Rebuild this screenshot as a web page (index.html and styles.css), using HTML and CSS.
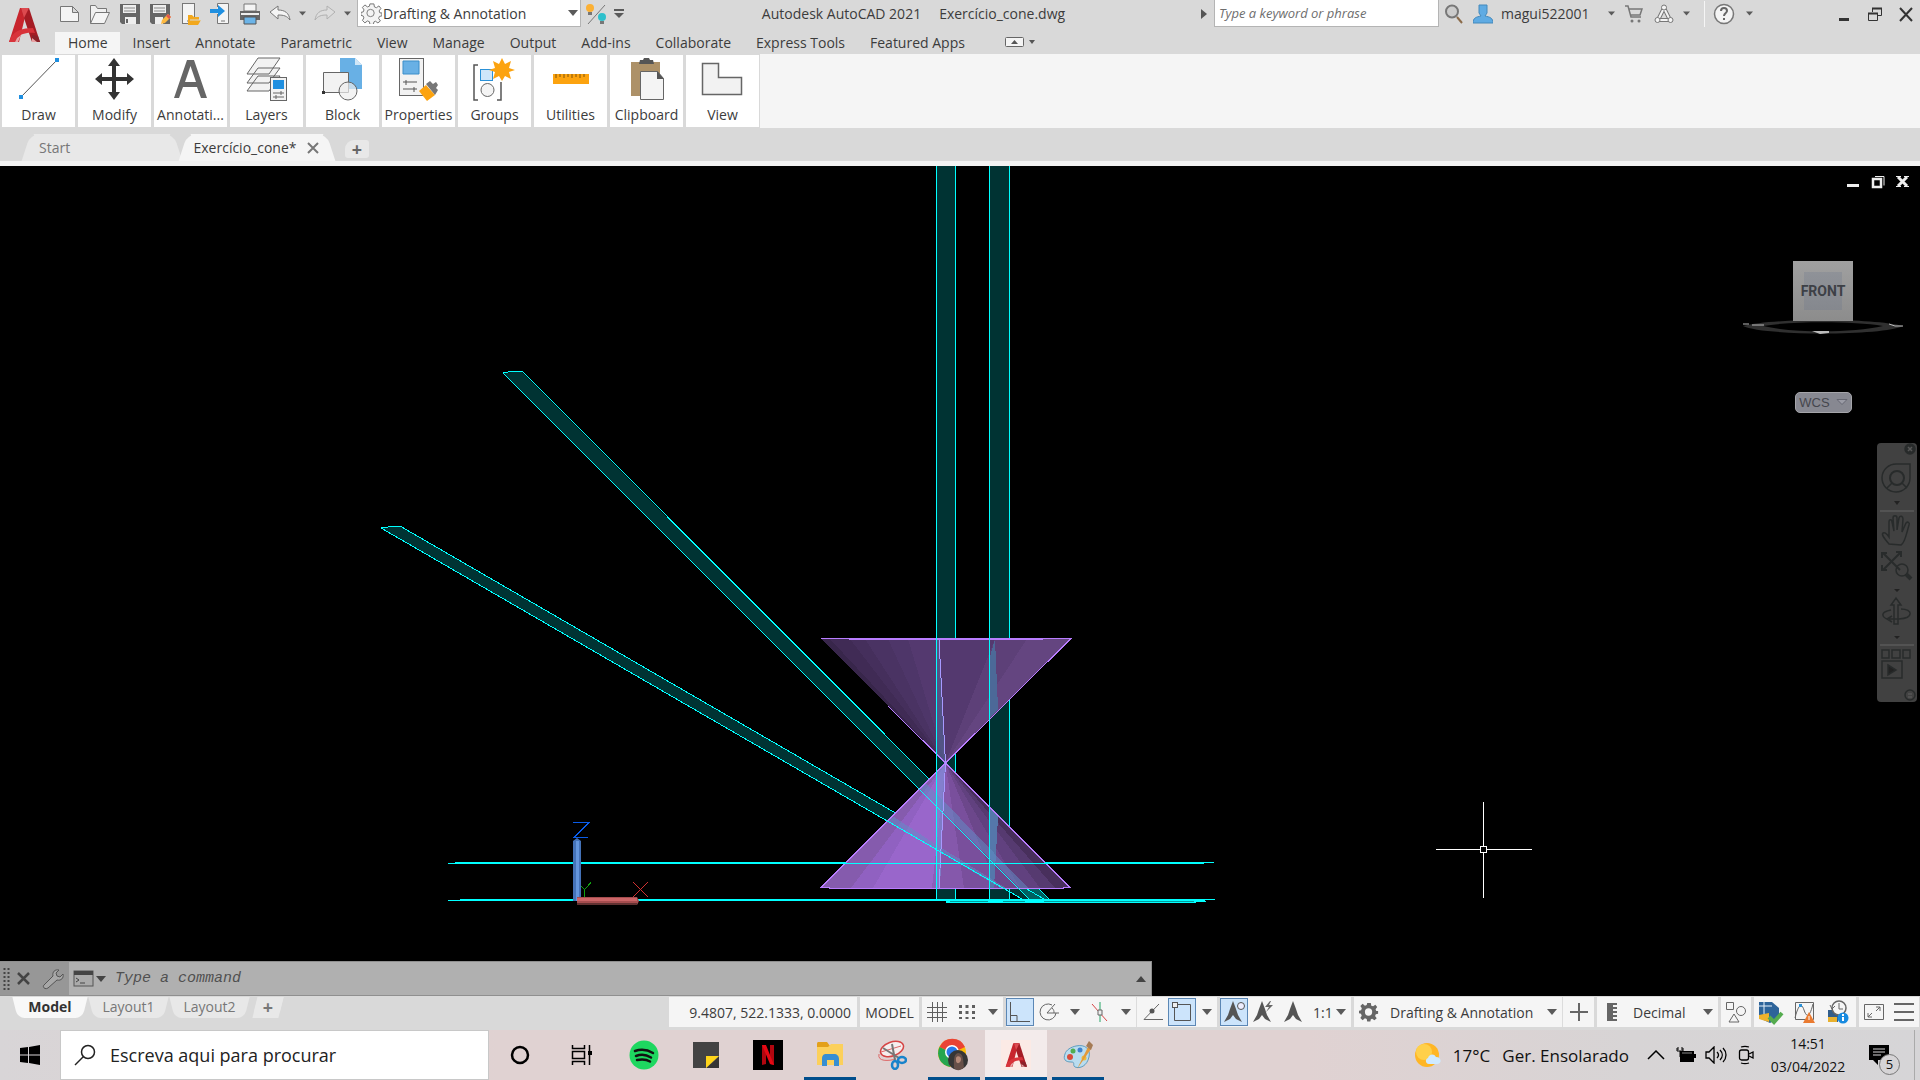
FILE: index.html
```html
<!DOCTYPE html>
<html lang="en">
<head>
    <meta charset="UTF-8">
    <meta name="viewport" content="width=device-width, initial-scale=1.0">
    <title>Autodesk AutoCAD 2021 - Exercício_cone.dwg</title>
    <link rel="stylesheet" href="styles.css">
</head>
<body>
    <svg class="defs" width="0" height="0" aria-hidden="true">
        <symbol id="caret" viewBox="0 0 10 6"><path d="M0 0h10L5 6z" fill="#5a5a5a"/></symbol>
        <symbol id="autocad" viewBox="0 0 32 36">
            <path d="M12 1h9l-4 9-6 25H1z" fill="#c8252d"/>
            <path d="M13 1h8l11 34h-8L15 8z" fill="#a51c24"/>
            <path d="M13 1h8l-5 10z" fill="#dd4a4f"/>
            <path d="M3 30c4-6 11-9 22-9l2 5c-9-1-15 1-19 6l-1 3H1z" fill="#d8333a"/>
            <path d="M24 28l6 1 2 6h-8z" fill="#8a2229"/>
            <path d="M7 35l2-4 4-3-3 7zM24 31l5 4h-5z" fill="#e8a3a4"/>
        </symbol>
        <symbol id="scale-mark" viewBox="0 0 20 24"><path d="M10 1l3 8 2 6 4 7-6-3-3-4-3 4-6 3 4-7 2-6z" fill="#555"/></symbol>
        <symbol id="gear" viewBox="0 0 22 22">
            <path d="M9 1h4l.5 3 2 .8L18 3l2 2.500-1.800 2.500.8 2H21v3l-2.500.5-.8 2L19.500 18 17 20l-2.500-1.700-1.500.7-.5 2.500H9l-.5-2.700-2-.8L4 20l-2.500-2.500L3 15l-.8-2L0 12.500V9.500L2.300 9l.8-2L1.500 4.500 4 2l2.500 2 2-.7z"/>
        </symbol>
    </svg>

    <header class="header">
        <button class="app-button" aria-label="Application menu"><svg width="32" height="36"><use href="#autocad"/></svg></button>
        <div class="titlebar">
            <div class="quick-access">
                <button class="tool" aria-label="New"><svg width="22" height="22" viewBox="0 0 22 22"><path d="M1.500 3.500h12l6 6v9h-18zM13.500 3.500v6h6" fill="#f4f4f4" stroke="#777"/></svg></button>
                <button class="tool" aria-label="Open"><svg width="22" height="22" viewBox="0 0 22 22"><path d="M1.500 20.500v-18h5l2 3h9v4" fill="#f0f0f0" stroke="#777"/><path d="M1.500 20.500l5-11h14l-5 11z" fill="#f4f4f4" stroke="#777"/></svg></button>
                <button class="tool" aria-label="Save"><svg width="22" height="22" viewBox="0 0 22 22"><path d="M1 1h20v20H3l-2-2z" fill="#666"/><path d="M4 2h13v8H4zM6 14h11v7H6z" fill="#eee"/><path d="M5 5h11M5 8h11" stroke="#888"/><path d="M8 16v4" stroke="#666" stroke-width="2"/></svg></button>
                <button class="tool" aria-label="Save as"><svg width="22" height="22" viewBox="0 0 22 22"><path d="M1 1h20v20H3l-2-2z" fill="#666"/><path d="M4 2h13v8H4zM6 14h8v7H6z" fill="#eee"/><path d="M5 5h11M5 8h11" stroke="#888"/><path d="M12 21l1-4 6-6 3 3-6 6z" fill="#fdb940"/><path d="M19 11l3 3-2 2-3-3z" fill="#e2574c"/></svg></button>
                <button class="tool" aria-label="Open from web"><svg width="22" height="22" viewBox="0 0 22 22"><rect x="3.500" y=".5" width="12" height="20" fill="#f4f4f4" stroke="#777"/><path d="M8 18h3" stroke="#777"/><path d="M9 22v-10h4l2 2h5v3h2l-3 5z" fill="#f2a81d"/><path d="M11 17h11" stroke="#d9d9d9"/></svg></button>
                <button class="tool" aria-label="Save to web"><svg width="22" height="22" viewBox="0 0 22 22"><path d="M8.500 4V.5h11v20h-11V11" fill="#f4f4f4" stroke="#777"/><path d="M12 18h4" stroke="#777"/><path d="M1 6h8V2l7 6-7 6v-4H1z" fill="#1f8fe0"/></svg></button>
                <button class="tool" aria-label="Plot"><svg width="22" height="22" viewBox="0 0 22 22"><path d="M5 1h12v7H5z" fill="#f4f4f4" stroke="#777"/><path d="M1 8h20v9H1z" fill="#666"/><path d="M2 11h18" stroke="#eee" stroke-width="2"/><path d="M5 14h12v7H5z" fill="#6cb4e8" stroke="#555"/></svg></button>
                <button class="tool" aria-label="Undo"><svg width="22" height="22" viewBox="0 0 22 22"><path d="M1 9l8-6v4c7 0 11 3 12 10-3-4-6-5-12-5v4z" fill="#f4f4f4" stroke="#777"/></svg></button>
                <button class="drop" aria-label="Undo list"><svg class="caret" width="7" height="5"><use href="#caret"/></svg></button>
                <button class="tool" aria-label="Redo"><svg width="22" height="22" viewBox="0 0 22 22"><path d="M21 9l-8-6v4C6 7 2 10 1 17c3-4 6-5 12-5v4z" fill="#ddd" stroke="#b0b0b0"/></svg></button>
                <button class="drop" aria-label="Redo list"><svg class="caret" width="7" height="5"><use href="#caret"/></svg></button>
                <label class="workspace">
                    <svg width="22" height="22" viewBox="-1 -1 24 24" fill="#f4f4f4" stroke="#777"><use href="#gear"/><circle cx="10.500" cy="11" r="4"/></svg>
                    <select aria-label="Workspace"><option>Drafting &amp; Annotation</option></select>
                    <svg class="caret" width="10" height="6"><use href="#caret"/></svg>
                </label>
                <button class="tool" aria-label="Toggle hints"><svg width="22" height="24" viewBox="0 0 22 24"><path d="M20 3L3 22" stroke="#777"/><circle cx="5" cy="6" r="4" fill="#fbb034"/><path d="M3 10h4v3H3z" fill="#777"/><circle cx="17" cy="15" r="4" fill="#2ec0cc"/><path d="M15 19h4v3h-4z" fill="#777"/></svg></button>
                <button class="drop" aria-label="Customize"><svg width="10" height="10" viewBox="0 0 10 10"><path d="M0 1h10" stroke="#5a5a5a" stroke-width="2"/><path d="M0 4h10L5 9z" fill="#5a5a5a"/></svg></button>
            </div>
            <div class="window-title"><span>Autodesk AutoCAD 2021</span><span>Exercício_cone.dwg</span></div>
            <div class="info-center">
                <svg width="6" height="10" viewBox="0 0 6 10"><path d="M0 0l6 5-6 5z" fill="#555"/></svg>
                <input class="keyword" type="text" placeholder="Type a keyword or phrase" aria-label="Search help">
                <button class="tool" aria-label="Search"><svg width="20" height="20" viewBox="0 0 20 20"><circle cx="8" cy="7.500" r="6" fill="#ccc" stroke="#777" stroke-width="2"/><path d="M13 13l5 6" stroke="#8b6b4a" stroke-width="2"/></svg></button>
                <button class="account"><svg width="20" height="20" viewBox="0 0 20 20"><path d="M6 1h8v8l-2 3c5 1 8 2 8 7H0c0-5 3-6 8-7L6 9z" fill="#5fabe3" stroke="#4489bb"/></svg>magui522001<svg class="caret" width="7" height="5"><use href="#caret"/></svg></button>
                <button class="tool" aria-label="App store"><svg width="18" height="20" viewBox="0 0 18 20"><path d="M0 2h3l3 11h10M4 5h13l-2 6H6" fill="none" stroke="#777" stroke-width="1.500"/><circle cx="7" cy="17" r="1.500" fill="#777"/><circle cx="14" cy="17" r="1.500" fill="#777"/></svg></button>
                <button class="tool" aria-label="Stay connected"><svg width="20" height="20" viewBox="0 0 20 20" fill="none"><path d="M10 4L4 16h12z" stroke="#777" stroke-width="4" stroke-linejoin="round"/><path d="M10 4L4 16h12z" stroke="#f4f4f4" stroke-width="2"/><circle cx="10" cy="3.500" r="2.500" fill="#f4f4f4" stroke="#777"/><circle cx="3.500" cy="16" r="2.500" fill="#f4f4f4" stroke="#777"/><circle cx="16.500" cy="16" r="2.500" fill="#f4f4f4" stroke="#777"/></svg></button>
                <button class="drop" aria-label="Connect list"><svg class="caret" width="7" height="5"><use href="#caret"/></svg></button>
                <button class="tool help" aria-label="Help"><svg width="22" height="22" viewBox="0 0 22 22" fill="none"><circle cx="11" cy="11" r="9.500" fill="#f4f4f4" stroke="#777" stroke-width="1.500"/><path d="M8 8c0-4 6-4 6 0 0 2-3 2-3 5M11 15v2" stroke="#666" stroke-width="2"/></svg></button>
                <button class="drop" aria-label="Help list"><svg class="caret" width="7" height="5"><use href="#caret"/></svg></button>
                <div class="window-buttons">
                    <button aria-label="Minimize"><svg width="16" height="16" viewBox="0 0 16 16"><path d="M3 12h10v3H3z" fill="#333"/></svg></button>
                    <button aria-label="Restore"><svg width="16" height="16" viewBox="0 0 16 16" fill="none" stroke="#333"><path d="M5.500 6V2.500h9v7H11M1.500 7.500h9v7h-9z"/><path d="M1 7.500h10M5 2.500h10" stroke-width="2"/></svg></button>
                    <button aria-label="Close"><svg width="16" height="16" viewBox="0 0 16 16"><path d="M2 2l12 13M14 2L2 15" stroke="#333" stroke-width="2"/></svg></button>
                </div>
            </div>
        </div>
        <nav class="ribbon-tabs">
            <button class="active">Home</button>
            <button>Insert</button>
            <button>Annotate</button>
            <button>Parametric</button>
            <button>View</button>
            <button>Manage</button>
            <button>Output</button>
            <button>Add-ins</button>
            <button>Collaborate</button>
            <button>Express Tools</button>
            <button>Featured Apps</button>
            <button class="ribbon-toggle" aria-label="Minimize ribbon"><svg width="30" height="10" viewBox="0 0 30 10"><rect x=".5" y=".5" width="18" height="9" rx="1" fill="#f4f4f4" stroke="#666"/><path d="M6 7l3.500-4L13 7zM24 3h6l-3 4z" fill="#555"/></svg></button>
        </nav>
    </header>

    <section class="ribbon">
        <button class="panel"><svg width="48" height="44" viewBox="0 0 48 44"><path d="M6 40L42 3" stroke="#555"/><path d="M4 38h4v4H4zM40 1h4v4h-4z" fill="#1f8fe0"/></svg>Draw</button>
        <button class="panel"><svg width="48" height="44" viewBox="0 0 48 44"><path d="M23 1l6 8h-4v11h11v-4l7 6-7 6v-4H25v11h4l-6 8-6-8h4V24H11v4l-7-6 7-6v4h10V9h-4z" fill="#333"/></svg>Modify</button>
        <button class="panel"><svg width="48" height="44" viewBox="0 0 48 44"><path d="M20 3h7l13 38h-6l-4-11H16l-4 11H7zM23.500 9L18 25h11z" fill="#666" fill-rule="evenodd"/></svg>Annotati...</button>
        <button class="panel"><svg width="48" height="44" viewBox="0 0 48 44" fill="#f2f2f2" stroke="#666"><path d="M4 34l11-15h22L26 34zM4 26l11-15h22L26 26zM4 17L15 1h22L26 17z"/><rect x="27.500" y="20.500" width="16" height="23"/><path d="M30 23h11v9H30z" fill="#1f8fe0" stroke="none"/><path d="M30 36h11M30 40h11M38 34v4M33 38v4"/></svg>Layers</button>
        <button class="panel"><svg width="48" height="44" viewBox="0 0 48 44"><path d="M21 1h15l7 7v24H21z" fill="#68b0e5"/><path d="M36 1l7 7h-7z" fill="#cfe6f7"/><path d="M4.500 15.500h25v20h-25z" fill="#f2f2f2" stroke="#666"/><circle cx="29" cy="34" r="9" fill="#eee" fill-opacity=".7" stroke="#666"/><path d="M3 34h3v3H3z" fill="#333"/></svg>Block</button>
        <button class="panel"><svg width="48" height="44" viewBox="0 0 48 44"><rect x="4.500" y="1.500" width="24" height="37" fill="#f2f2f2" stroke="#666"/><path d="M8 4h16v13H8z" fill="#68b0e5" stroke="#3b8ec9"/><path d="M8 25h14M8 32h14M11 23v5M19 30v5" stroke="#555"/><path d="M24 34l7-6 9 10-8 6z" fill="#fca30f"/><path d="M31 27l4-3 3 3 3-2 2 3-2 3 2 2-3 5z" fill="#777"/></svg>Properties</button>
        <button class="panel"><svg width="48" height="44" viewBox="0 0 48 44" fill="none"><path d="M7 8H3v35h4M26 43h4V25" stroke="#555" stroke-width="1.500"/><rect x="9.500" y="12.500" width="12" height="11" fill="#cfe6fa" stroke="#2a91d8"/><circle cx="16.500" cy="33" r="6.500" fill="#f4f4f4" stroke="#666"/><path d="M31 1l3 6 6-3-2 7 6 2-6 2 2 7-6-3-3 5-3-5-6 3 2-7-6-2 6-2-2-7 6 3z" fill="#fca30f"/></svg>Groups</button>
        <button class="panel"><svg width="48" height="44" viewBox="0 0 48 44"><path d="M6 17h36v10H6z" fill="#fca30f"/><path d="M9 17v4M13 17v3M17 17v4M21 17v3M25 17v4M29 17v3M33 17v4M37 17v3" stroke="#80540b"/></svg>Utilities</button>
        <button class="panel"><svg width="48" height="44" viewBox="0 0 48 44"><path d="M8 5h29v34H8z" fill="#ad9168"/><path d="M16 7l1-4h3l1-2h5l1 2h3l1 4z" fill="#555"/><path d="M17.500 14.500h17l6 7v21h-23z" fill="#f4f4f4" stroke="#666"/><path d="M34 14v8h7z" fill="#555"/></svg>Clipboard</button>
        <button class="panel"><svg width="48" height="44" viewBox="0 0 48 44"><path d="M3.500 6.500h16v14h23v17h-39z" fill="#f2f2f2" stroke="#666" stroke-width="1.500"/></svg>View</button>
    </section>

    <nav class="file-tabs">
        <button class="file-tab start">Start</button>
        <button class="file-tab active">Exercício_cone*<svg width="12" height="12" viewBox="0 0 12 12"><path d="M1 1l10 10M11 1L1 11" stroke="#777" stroke-width="2"/></svg></button>
        <button class="add-tab" aria-label="New drawing">+</button>
    </nav>

    <main class="workspace-area">
        <svg class="drawing" viewBox="0 166 1920 830" preserveAspectRatio="xMidYMid slice" role="img" aria-label="Double cone with cutting planes">
            <!-- cutting planes -->
            <g fill="#003333">
                <path d="M936 160h20v740h-20zM989 160h21v740h-21z"/>
                <path d="M503 373l18-2 527 528h-19z"/>
                <path d="M381 528l19-2 644 373h-22z"/>
                <path d="M1019 889h20l9 10h-19z" fill="#006060"/>
            </g>
            <g class="edges">
                <path d="M955.500 160v740M1009.500 160v740"/>
                <path d="M503 373l5-1 14-1 527 528M381 528l14-2h5l644 373"/>
            </g>
            <!-- upper cone -->
            <g shape-rendering="crispEdges">
                <path d="M821 639h9l115.500 124z" fill="#38264b"/>
                <path d="M830 639h20l95.500 124z" fill="#402b55"/>
                <path d="M850 639h15l80.500 124z" fill="#452f5c"/>
                <path d="M865 639h23l57.500 124z" fill="#4a3363"/>
                <path d="M888 639h20l37.500 124z" fill="#4e3669"/>
                <path d="M908 639h87l-49.500 124z" fill="#54396f"/>
                <path d="M995 639h32l-81.500 124z" fill="#5d4078"/>
                <path d="M1027 639h44l-125.500 124z" fill="#644580"/>
                <path d="M989 660l6-21 3 70-9 10z" fill="#4c6998"/>
                <path d="M936 639h3l6.500 124-9.500-10z" fill="#51608e" fill-opacity=".7"/>
            </g>
            <!-- lower cone -->
            <g shape-rendering="crispEdges">
                <path d="M945.500 763L821 888h30z" fill="#855bad"/>
                <path d="M945.500 763L851 888h22z" fill="#9061c1"/>
                <path d="M945.500 763L873 888h59z" fill="#9966cb"/>
                <path d="M945.500 763L932 888h8z" fill="#8c5eb9"/>
                <path d="M945.500 763L940 888h24z" fill="#8558ab"/>
                <path d="M945.500 763L964 888h34z" fill="#794f9c"/>
                <path d="M945.500 763L998 888h22z" fill="#6c478b"/>
                <path d="M945.500 763l74.500 125h20z" fill="#61417f"/>
                <path d="M945.500 763L1040 888h15z" fill="#563a70"/>
                <path d="M945.500 763L1055 888h15z" fill="#482f5c"/>
                <path d="M936 773l9.500-10-5.500 125h-4z" fill="#7590d0" fill-opacity=".6"/>
                <path d="M989 808l9 9-4 71h-5z" fill="#5577ab"/>
                <path d="M920 789l6-6 102 105h-9zM887 820l7-3 46 30 66 41h-6z" fill="#5f8fc8" fill-opacity=".5"/>
            </g>
            <g class="rims">
                <path d="M821 638.500h250L945.500 763 1070 887.500h-7v1H829v-1h-8L945.500 763 888 706M849 639.500h194"/>
                <path d="M939 640l6.500 123L939 888" stroke="#a79aff"/>
            </g>
            <!-- front edges -->
            <g class="edges">
                <path d="M936.500 160v740M989.500 160v740"/>
                <path d="M503 373l526 526M381 528l641 371"/>
                <path d="M448 863.500h756M448 900.500h757M946 902.500h250"/>
                <path d="M455 862.500h391M1045 862.500h169M460 899.500h755M946 901.500h260"/>
            </g>
            <path d="M950 901.500h38M1003 901.500h22M1044 901.500h150" stroke="#009c9c" shape-rendering="crispEdges"/>
            <!-- UCS icon -->
            <path d="M577 838l4 3v60h-8v-60z" fill="#4472b8"/>
            <path d="M576 841h3v60h-3z" fill="#6496dd"/>
            <path d="M577 897h60l2 4-2 4h-60z" fill="#a64d4f"/>
            <path d="M577 898h60v3h-60z" fill="#cc6668"/>
            <path d="M577 903h60v2h-60z" fill="#613131"/>
            <g fill="none" shape-rendering="crispEdges">
                <path d="M573 822.500h16l-15 15h14" stroke="#0a5ce8"/>
                <path d="M581 886l3.500 3.500 6.500-7M584.500 889v8" stroke="#10a010"/>
                <path d="M633 882l15 15M648 882l-15 15" stroke="#d03030"/>
            </g>
            <path d="M1436 849.500h44M1487 849.500h45M1483.500 802v44M1483.500 853v45M1480.500 846.500h6v6h-6z" fill="none" stroke="#fff" shape-rendering="crispEdges"/>
        </svg>

        <div class="viewport-buttons">
            <button aria-label="Minimize drawing"><svg width="14" height="14" viewBox="0 0 14 14"><path d="M1 9h12v3H1z" fill="#eee"/></svg></button>
            <button aria-label="Restore drawing"><svg width="14" height="14" viewBox="0 0 14 14" fill="none" stroke="#eee"><path d="M4 1.500h9v9"/><rect x="2" y="4" width="8" height="8" stroke-width="2.500"/></svg></button>
            <button aria-label="Close drawing"><svg width="14" height="14" viewBox="0 0 14 14"><path d="M2 2l9 9M11 2l-9 9" stroke="#eee" stroke-width="3"/><path d="M0 1.500h5M8 1.500h5M0 11.500h5M8 11.500h5" stroke="#eee"/></svg></button>
        </div>

        <div class="view-cube">
            <svg width="162" height="16" viewBox="0 0 162 16"><path d="M1 7c30-8 130-8 160 0-20 10-140 10-160 0zm20 0c30 7 90 7 120 0-30-5-90-5-120 0z" fill="#303030" fill-rule="evenodd"/><path d="M1 5h6M10 6h12M147 5l6 2h8" stroke="#bbb" fill="none"/><path d="M70 12h17v2l-9 1z" fill="#bbb"/></svg>
            <button class="cube-face">FRONT</button>
        </div>
        <button class="wcs">WCS<svg width="12" height="7" viewBox="0 0 12 7"><path d="M1 .5h10l-5 5z" fill="#9a9ba5" stroke="#666772"/></svg></button>

        <div class="nav-bar">
            <svg width="40" height="259" viewBox="0 0 40 259" fill="none" stroke="#282b2b" stroke-width="1.500">
                <circle cx="33" cy="6" r="5" fill="#282b2b"/><path d="M31 4l4 4M35 4l-4 4M31 251h4M31 254h4" stroke="#555"/>
                <path d="M20 21h13v14a14 14 0 1 1-13-14z"/><circle cx="20" cy="35" r="7" stroke-width="2"/><path d="M15 40l-5 5M25 40l5 5"/>
                <path d="M3 68h34M3 202h34" stroke="#595959"/>
                <path d="M12 101C8 96 4 92 6 90c2-1 4 1 6 4V79c0-3 3-3 3 0l2 9-1-13c0-3 4-3 4 0v12l2-12c1-3 4-2 4 1l-1 13 4-9c2-2 4 0 3 2-3 10-4 18-8 20z"/>
                <path d="M6 110l17 17M23 110L6 127M5 115v-5h5M19 109h5v5M5 122v5h5" stroke-width="2"/><circle cx="25" cy="127" r="6"/><path d="M29 131l5 5" stroke-width="4"/>
                <path d="M17 181v-19h-3l5-7 5 7h-3v19zM12 177c-8-3-9-8 2-10M24 166c12 0 13 9-2 10H12M15 173l-5 3 5 3"/>
                <path d="M5 207h7v8H5zM15 207h8v8h-8zM26 207h7v8h-7zM5 218h20v17H5z"/><path d="M11 222l8 5-8 5z" fill="#222"/>
                <path d="M17 58h6l-3 4zM17 146h6l-3 3zM17 193h6l-3 3z" fill="#222" stroke="none"/><circle cx="33" cy="252" r="5"/>
            </svg>
        </div>

        <div class="command-line">
            <div class="command-tools">
                <svg width="8" height="24" viewBox="0 0 8 24"><path d="M1.500 1v22M5.500 1v22" stroke="#444" stroke-width="2" stroke-dasharray="2 2"/></svg>
                <button aria-label="Close command line"><svg width="13" height="13" viewBox="0 0 13 13"><path d="M1 1l11 11M12 1L1 12" stroke="#444" stroke-width="2.500"/></svg></button>
                <button class="wrench" aria-label="Customize command line"><svg width="22" height="22" viewBox="0 0 22 22"><path d="M2 17l9-9c-1-4 2-7 6-6l-3 3 1 3 3 1 3-3c1 4-2 7-6 6l-9 8c-3 2-6-1-4-3z" fill="#a8a8a8" stroke="#555"/></svg></button>
            </div>
            <button class="command-icon" aria-label="Recent commands"><svg width="34" height="18" viewBox="0 0 34 18"><rect x="1" y="1" width="19" height="15" fill="#aaa" stroke="#555"/><path d="M1 1h19v4H1z" fill="#444"/><path d="M3 8l3 2-3 2M7 13h5" stroke="#444" fill="none"/><path d="M23 6h10l-5 6z" fill="#444"/></svg></button>
            <input type="text" placeholder="Type a command" aria-label="Command">
            <button class="command-history" aria-label="Command history"><svg width="10" height="6" viewBox="0 0 10 6"><path d="M0 6h10L5 0z" fill="#444"/></svg></button>
        </div>
    </main>

    <footer class="status-bar">
        <nav class="layout-tabs">
            <button class="active">Model</button>
            <button>Layout1</button>
            <button>Layout2</button>
            <button class="add-layout" aria-label="New layout">+</button>
        </nav>
        <div class="status-group coords">9.4807, 522.1333, 0.0000</div>
        <div class="status-group"><button class="model">MODEL</button></div>
        <div class="status-group">
            <button aria-label="Grid"><svg width="20" height="20" viewBox="0 0 20 20"><path d="M5.500 0v20M10.500 0v20M15.500 0v20M0 5.500h20M0 10.500h20M0 15.500h20" stroke="#5f5f5f"/></svg></button>
            <button aria-label="Snap"><svg width="18" height="18" viewBox="0 0 18 18"><path d="M2.500 2v14M9 2v14M15.500 2v14" stroke="#5f5f5f" stroke-width="3" stroke-dasharray="3 3"/></svg></button>
            <button class="narrow" aria-label="Snap settings"><svg class="caret" width="10" height="6"><use href="#caret"/></svg></button>
        </div>
        <div class="status-group">
            <button class="on" aria-label="Ortho"><svg width="22" height="22" viewBox="0 0 22 22" fill="none" stroke="#555"><path d="M1.500 1v19.500H21M2 14.500h6V20"/></svg></button>
            <button aria-label="Polar tracking"><svg width="22" height="22" viewBox="0 0 22 22" fill="none" stroke="#666"><path d="M14 4a8 8 0 1 0 4 8M9 12h12M9 12l8-9M14 7c2 2 2 3 2 5"/></svg></button>
            <button class="narrow" aria-label="Polar settings"><svg class="caret" width="10" height="6"><use href="#caret"/></svg></button>
            <button aria-label="Isometric drafting"><svg width="20" height="22" viewBox="0 0 20 22" fill="none"><path d="M10 1v20" stroke="#27a567"/><path d="M2 3l7 8 8 9" stroke="#d64545"/><path d="M8 9h4v5H8z" stroke="#666" fill="#eee"/></svg></button>
            <button class="narrow" aria-label="Isoplane list"><svg class="caret" width="10" height="6"><use href="#caret"/></svg></button>
            <button class="divided" aria-label="Object tracking"><svg width="22" height="20" viewBox="0 0 22 20"><path d="M17 2L2 17.500h19" fill="none" stroke="#666"/><circle cx="10" cy="9" r="2.500" fill="#555"/></svg></button>
            <button class="on" aria-label="Object snap"><svg width="22" height="22" viewBox="0 0 22 22" fill="none" stroke="#555"><path d="M5 3.500h14.500v16h-16V6"/><rect x="1.500" y="1.500" width="5" height="5" fill="#eee"/></svg></button>
            <button class="narrow" aria-label="Snap modes"><svg class="caret" width="10" height="6"><use href="#caret"/></svg></button>
        </div>
        <div class="status-group">
            <button class="on" aria-label="Annotation visibility"><svg width="24" height="24" viewBox="0 0 24 24"><use href="#scale-mark" x="1" width="20" height="24"/><circle cx="19" cy="6" r="3.500" fill="#eef" stroke="#555"/></svg></button>
            <button aria-label="Auto scale"><svg width="24" height="24" viewBox="0 0 24 24"><use href="#scale-mark" x="1" width="20" height="24"/><path d="M19 1l-5 6h4l-3 5 7-7h-4l2-4z" fill="#666"/></svg></button>
            <button aria-label="Annotation scale"><svg width="20" height="24"><use href="#scale-mark"/></svg></button>
            <label class="status-select scale"><select aria-label="Scale"><option>1:1</option></select><svg class="caret" width="10" height="6"><use href="#caret"/></svg></label>
        </div>
        <div class="status-group">
            <label class="status-select switcher"><svg width="20" height="22" viewBox="0 0 22 22" fill="#666"><use href="#gear"/><circle cx="10.500" cy="11" r="4" fill="#f5f5f5"/></svg><select aria-label="Workspace switching"><option>Drafting &amp; Annotation</option></select><svg class="caret" width="10" height="6"><use href="#caret"/></svg></label>
            <button class="divided" aria-label="Annotation monitor"><svg width="20" height="20" viewBox="0 0 20 20"><path d="M10 1v18M1 10h18" stroke="#666" stroke-width="2"/></svg></button>
        </div>
        <div class="status-group">
            <label class="status-select units"><svg width="12" height="20" viewBox="0 0 12 20"><path d="M1 1h10v2H7v2h4v2H7v2h4v2H7v2h4v2H7v2h4v2H1z" fill="#666"/></svg><select aria-label="Units"><option>Decimal</option></select><svg class="caret" width="10" height="6"><use href="#caret"/></svg></label>
        </div>
        <div class="status-group"><button aria-label="Isolate objects"><svg width="20" height="22" viewBox="0 0 20 22" fill="none" stroke="#666"><path d="M.5 1.500h7v7h-7zM8 13l5 8H3z"/><circle cx="15" cy="10" r="4.500"/></svg></button></div>
        <div class="status-group wide">
            <button aria-label="Graphics performance"><svg width="26" height="26" viewBox="0 0 26 26"><path d="M1 3h13l7 6v10l-9 5-11-5z" fill="#2d649a"/><path d="M1 16l10-2v9L1 20z" fill="#efb22c"/><path d="M6 0v15M0 7h14" stroke="#e7f1fa"/><path d="M11 18l5 5 8-9" stroke="#55ac4f" stroke-width="4" fill="none"/></svg></button>
            <button aria-label="Drawing recovery"><svg width="22" height="24" viewBox="0 0 22 24" fill="none"><path d="M1.500 2.500h18v17h-18zM1 18C5 2 8 4 10 10s5 10 9-6" stroke="#666"/><path d="M5 4h3v3H5z" fill="#2a91d8"/><path d="M15 12l6 11H9z" fill="#ea7b31"/><path d="M15 16v4" stroke="#fff"/></svg></button>
            <button aria-label="Notices"><svg width="24" height="26" viewBox="0 0 24 26"><path d="M1 11h10v12H1z" fill="#315d8b"/><path d="M1 18h9v5H1z" fill="#e8b12e"/><circle cx="12" cy="9" r="7" fill="#f5f5f5" stroke="#666" stroke-width="1.500"/><path d="M12 4v6h4M3 6l2 4 3-3" fill="none" stroke="#666"/><circle cx="16" cy="19" r="5.500" fill="#188be0"/><path d="M16 15v2M16 18v4" stroke="#fff" stroke-width="2"/></svg></button>
        </div>
        <div class="status-group">
            <button aria-label="Clean screen"><svg width="20" height="16" viewBox="0 0 20 16" fill="none" stroke="#666"><path d="M.5.5h19v15H.500zM12 7l4-4M12 3h4v4M8 9l-4 4M4 9v4h4"/></svg></button>
            <button aria-label="Customization"><svg width="20" height="20" viewBox="0 0 20 20"><path d="M0 2h20M0 10h20M0 18h20" stroke="#666" stroke-width="2"/></svg></button>
        </div>
    </footer>

    <div class="taskbar">
        <button class="win-start" aria-label="Start"><svg width="20" height="20" viewBox="0 0 20 20"><path d="M0 3l8-1v7.500H0zM9 2l11-2v9.500H9zM0 10.500h8V18l-8-1zM9 10.500h11V20L9 18z"/></svg></button>
        <label class="win-search">
            <svg width="22" height="22" viewBox="0 0 22 22" fill="none" stroke="#222" stroke-width="1.500"><circle cx="14" cy="8" r="6.500"/><path d="M9.500 12.500L1 21"/></svg>
            <input type="text" placeholder="Escreva aqui para procurar" aria-label="Procurar">
        </label>
        <div class="task-apps">
            <button aria-label="Cortana"><svg width="20" height="20" viewBox="0 0 20 20"><circle cx="10" cy="10" r="8" fill="none" stroke="#000" stroke-width="2.500"/></svg></button>
            <button aria-label="Task view"><svg width="22" height="22" viewBox="0 0 22 22" fill="none" stroke="#000"><path d="M1.500 1v3.500h12V1M1.500 21v-3.500h12V21M1.500 7.500h12v7h-12zM18.500 1v20" stroke-width="1.500"/><path d="M17 7h4v4h-4z" fill="#000" stroke="none"/></svg></button>
            <button aria-label="Spotify"><svg width="30" height="30" viewBox="0 0 30 30"><circle cx="15" cy="15" r="14.500" fill="#1ed760"/><path d="M6 11c6-2 13-1 18 2M7 16c5-2 11-1 15 1.500M8 20c5-1 9-1 13 1.500" fill="none" stroke="#111" stroke-width="2.500" stroke-linecap="round"/></svg></button>
            <button aria-label="Sticky notes"><svg width="28" height="28" viewBox="0 0 28 28"><path d="M1 1h26v14L14 27H1z" fill="#434343"/><path d="M27 15v12H14z" fill="#353535"/><path d="M14 15h13L14 27z" fill="#ffd51a"/></svg></button>
            <button aria-label="Netflix"><svg width="30" height="30" viewBox="0 0 30 30"><path d="M0 0h30v30H0z"/><path d="M9 5h4v19l-4 1zM17 5h4v20l-4-1z" fill="#b1060f"/><path d="M9 5h4l8 20-4-1z" fill="#e50914"/></svg></button>
            <button class="open" aria-label="File explorer"><svg width="30" height="28" viewBox="0 0 30 28"><path d="M2 3c0-2 1-2 2-2h8l3 4v3H2z" fill="#e3a01a"/><path d="M2 6h11l3-3h12v21H2z" fill="#fcd05b"/><path d="M7 25v-7c0-4 2-5 4-5h8c3 0 5 2 5 5v7h-5v-6h-7v6z" fill="#368ed3"/></svg></button>
            <button aria-label="Snip"><svg width="30" height="30" viewBox="0 0 30 30" fill="none"><ellipse cx="15" cy="9" rx="12" ry="7" transform="rotate(-20 15 9)" fill="#f5eeee" stroke="#d64545" stroke-width="1.500"/><path d="M2 14c-2 8 10 7 17 5M4 12l20-6" stroke="#d66"/><path d="M15 4l3 16M6 8l16 10" stroke="#777" stroke-width="2"/><ellipse cx="25" cy="20" rx="4" ry="3" stroke="#1883cb" stroke-width="2.500"/><ellipse cx="18" cy="25" rx="3" ry="4" stroke="#1883cb" stroke-width="2.500"/></svg></button>
            <button class="open" aria-label="Chrome"><svg width="34" height="34" viewBox="0 0 34 34"><circle cx="15" cy="15" r="14" fill="#fbbc05"/><path d="M15 15L2.500 9A14 14 0 0 1 28 9z" fill="#ea4335"/><path d="M15 15L2.500 9A14 14 0 0 0 13 29z" fill="#25a650"/><circle cx="15" cy="14" r="7" fill="#fff"/><circle cx="15" cy="14" r="5.500" fill="#2a79e8"/><circle cx="21" cy="22" r="10" fill="#363636"/><path d="M17 30c0-5-1-14 4-15 6 0 5 9 6 14-3 4-8 4-10 1z" fill="#675049"/><path d="M19 20c1-3 5-2 5 1 0 4-4 6-5 2z" fill="#b58a79"/></svg></button>
            <button class="open current" aria-label="AutoCAD"><svg width="30" height="30" viewBox="0 0 30 30"><path d="M0 0h30v30H0z" fill="#fbeae5"/><use href="#autocad" x="4" y="2" width="22" height="26"/></svg></button>
            <button class="open" aria-label="Paint"><svg width="30" height="30" viewBox="0 0 30 30"><path d="M13 6c9-2 15 3 13 11-2 9-9 12-14 10-3-2 1-5-4-5-6 0-8-3-6-8 1-4 6-7 11-8z" fill="#b9dcef" stroke="#5f9dbf"/><circle cx="7" cy="17" r="3" fill="#d94b3a"/><circle cx="10" cy="11" r="2.500" fill="#51ad51"/><circle cx="17" cy="10" r="2.500" fill="#3f82ce"/><circle cx="21" cy="18" r="2.500" fill="#eebc36"/><path d="M14 29L25 7l3 2z" fill="#e39a3a"/><path d="M23 6l3-5 4 4-2 5z" fill="#a57b55"/></svg></button>
        </div>
        <button class="weather"><svg width="26" height="26" viewBox="0 0 26 26"><circle cx="12" cy="13" r="12" fill="#ffb625"/><circle cx="9" cy="10" r="8" fill="#ffd04a"/><path d="M14 22c-4 0-4-5-1-6 1-4 6-5 8-1 6 0 6 7 1 7z" fill="#cfeaff"/></svg><span>17°C</span><span>Ger. Ensolarado</span></button>
        <div class="tray">
            <button aria-label="Hidden icons"><svg width="18" height="10" viewBox="0 0 18 10"><path d="M1 9l8-8 8 8" fill="none" stroke="#000" stroke-width="1.500"/></svg></button>
            <button aria-label="Battery"><svg width="20" height="16" viewBox="0 0 20 16"><path d="M4 4h14v3h2v4h-2v4H4z"/><path d="M1 1v3h6V1M4 4v6M2 0v3M6 0v3" stroke="#000" fill="none"/><path d="M6 6h10" stroke="#888"/></svg></button>
            <button aria-label="Volume"><svg width="22" height="18" viewBox="0 0 22 18" fill="none" stroke="#000"><path d="M1 6h3l5-5v16l-5-5H1zM12 6c2 2 2 4 0 6M15 4c3 3 3 7 0 10M18 2c4 4 4 10 0 14" stroke-width="1.300"/></svg></button>
            <button aria-label="Meet now"><svg width="18" height="20" viewBox="0 0 18 20" fill="none" stroke="#000" stroke-width="1.300"><rect x="2.500" y="5" width="9" height="10" rx="2"/><path d="M12 9l4-2v6l-4-2M4 2c3-1 5-1 8 0M4 18c3 1 5 1 8 0"/></svg></button>
        </div>
        <button class="clock"><span>14:51</span><span>03/04/2022</span></button>
        <button class="notices" aria-label="Notifications"><svg width="22" height="22" viewBox="0 0 22 22"><path d="M1 1h20v15H10v5l-5-5H1z"/><path d="M5 5h12M5 8h12M5 11h8" stroke="#d6d4d6"/></svg><span class="badge">5</span></button>
    </div>
</body>
</html>
```
FILE: styles.css
```css
* {
    margin: 0;
    padding: 0;
    box-sizing: border-box;
}

body {
    font-family: 'Open Sans', 'Noto Sans', sans-serif;
    font-size: 14px;
    color: #3c3c3c;
    background: #d9d9d9;
    min-height: 100vh;
    display: flex;
    flex-direction: column;
    overflow: hidden;
}

button,
input,
select {
    font: inherit;
    color: inherit;
    background: none;
    border: none;
    border-radius: 0;
    outline: none;
}

button {
    display: flex;
    align-items: center;
    justify-content: center;
    white-space: nowrap;
    flex-shrink: 0;
}

select {
    appearance: none;
    flex: 1;
    min-width: 0;
}

svg {
    display: block;
    flex-shrink: 0;
}

.defs {
    position: absolute;
}

/* Title bar and ribbon tabs */
.header {
    display: grid;
    grid-template-columns: 55px 1fr;
    grid-template-rows: 27px 27px;
}

.app-button {
    grid-row: 1 / 3;
    padding: 0 8px 4px 0;
}

.titlebar {
    display: flex;
    align-items: center;
    justify-content: space-between;
    height: 27px;
}

.quick-access,
.info-center {
    display: flex;
    align-items: center;
}

.tool {
    width: 30px;
    height: 26px;
}

.drop {
    width: 15px;
    height: 26px;
}

.workspace {
    display: flex;
    align-items: center;
    gap: 1px;
    width: 224px;
    height: 27px;
    margin-left: 2px;
    padding: 0 2px;
    background: #fff;
    border: 1px solid #b4b4b4;
    border-top: none;
}

.window-title {
    display: flex;
    gap: 18px;
}

.keyword {
    width: 225px;
    height: 27px;
    margin-left: 7px;
    padding: 0 4px;
    font-size: 13px;
    font-style: italic;
    background: #fff;
    border: 1px solid #b4b4b4;
    border-top: none;
}

.keyword::placeholder {
    color: #6e6e6e;
}

.account {
    width: 150px;
    gap: 8px;
    justify-content: flex-start;
    padding-left: 4px;
}

.account .caret {
    margin-left: 10px;
}

.help {
    width: 38px;
    margin-left: 10px;
    border-left: 1px solid #f5f5f5;
}

.window-buttons {
    display: flex;
    gap: 15px;
    margin-left: 79px;
    padding-right: 6px;
}

.ribbon-tabs {
    display: flex;
}

.ribbon-tabs button {
    height: 22px;
    margin-top: 5px;
    padding: 0 12px 2px 13px;
}

.ribbon-tabs .active {
    background: #f5f5f5;
}

.ribbon-tabs .ribbon-toggle {
    padding-left: 28px;
}

.ribbon {
    display: flex;
    gap: 3px;
    height: 74px;
    padding: 1px 2px;
    background: linear-gradient(to right, #d9d9d9 760px, #f5f5f5 760px);
}

.panel {
    flex-direction: column;
    gap: 4px;
    width: 73px;
    padding-bottom: 2px;
    background: #fff;
}

.file-tabs {
    display: flex;
    height: 38px;
    padding: 6px 0 0 26px;
    border-bottom: 5px solid #f2f2f2;
}

/* Slanted tab sides */
.file-tab,
.layout-tabs button,
.add-tab {
    position: relative;
    z-index: 0;
}

.file-tab::before,
.file-tab::after,
.layout-tabs button::before,
.layout-tabs button::after {
    content: '';
    position: absolute;
    z-index: -1;
    top: 0;
    bottom: 0;
    left: 0;
    right: 12px;
    background: #e8e8e8;
    border-radius: 9px 0 0 0;
    transform: skewX(-18deg);
}

.file-tab::after,
.layout-tabs button::after {
    left: 12px;
    right: 0;
    border-radius: 0 9px 0 0;
    transform: skewX(18deg);
}

.start {
    width: 152px;
    padding-left: 13px;
    justify-content: flex-start;
    color: #777;
}

.file-tab.active {
    width: 148px;
    gap: 10px;
    margin-left: 5px;
    padding-right: 2px;
}

.file-tab.active::before,
.file-tab.active::after {
    background: #f5f5f5;
}

.add-tab {
    width: 24px;
    height: 18px;
    margin: 6px 0 0 14px;
    background: #e8e8e8;
    border-radius: 9px 3px 3px 3px;
    color: #666;
    font-size: 18px;
    font-weight: 700;
}

/* Drawing area */
.workspace-area {
    position: relative;
    flex: 1;
    min-height: 0;
    background: #000;
}

.drawing {
    position: absolute;
    width: 100%;
    height: 100%;
}

.edges {
    fill: none;
    stroke: #00ffff;
    shape-rendering: crispEdges;
}

.rims {
    fill: none;
    stroke: #b97dff;
    shape-rendering: crispEdges;
}

.viewport-buttons {
    position: absolute;
    top: 9px;
    right: 10px;
    display: flex;
    gap: 11px;
}

.view-cube {
    position: absolute;
    top: 95px;
    right: 16px;
    width: 162px;
    height: 74px;
}

.view-cube svg {
    position: absolute;
    bottom: 0;
}

.cube-face {
    position: relative;
    width: 60px;
    height: 60px;
    margin: 0 auto;
    background: linear-gradient(#8f9298, #85888e) center / 38px 38px no-repeat, linear-gradient(#a0a0a0, #8c8c8c);
    color: #3d4046;
    font-family: Roboto, 'Open Sans', sans-serif;
    font-size: 14px;
    font-weight: 700;
}

.wcs {
    position: absolute;
    top: 226px;
    right: 68px;
    width: 57px;
    height: 21px;
    gap: 6px;
    background: #878891;
    border: 1px solid #a5a5aa;
    border-radius: 5px;
    color: #45464d;
    font-family: 'Liberation Sans', sans-serif;
    font-size: 13px;
}

.nav-bar {
    position: absolute;
    top: 277px;
    right: 3px;
    background: #414141;
    border-radius: 4px;
}

.command-line {
    position: absolute;
    left: 0;
    bottom: 0;
    display: flex;
    width: 60%;
    height: 35px;
    background: #b0b0b0;
    border: 1px solid #8f8f8f;
    border-left: none;
}

.command-tools {
    display: flex;
    align-items: center;
    gap: 6px;
    width: 69px;
    padding-left: 3px;
    background: #979797;
}

.wrench {
    margin-left: 6px;
}

.command-icon {
    width: 42px;
}

.command-line input {
    flex: 1;
    padding: 0 4px;
    font-family: 'Liberation Mono', monospace;
    font-size: 15px;
    font-style: italic;
}

.command-line input::placeholder {
    color: #505050;
}

.command-history {
    width: 20px;
}

/* Status bar */
.status-bar {
    display: flex;
    gap: 3px;
    height: 34px;
    padding: 1px 1px 3px 0;
}

.layout-tabs {
    display: flex;
    gap: 6px;
    flex: 1;
    padding-left: 15px;
}

.layout-tabs button {
    height: 21px;
    width: 70px;
    padding-bottom: 2px;
    color: #777;
}

.layout-tabs button + button {
    width: 75px;
}

.layout-tabs button::before {
    border-radius: 0 0 0 7px;
    transform: skewX(14deg);
}

.layout-tabs button::after {
    border-radius: 0 0 7px 0;
    transform: skewX(-14deg);
}

.layout-tabs .active {
    color: #333;
    font-weight: 700;
}

.layout-tabs .active::before,
.layout-tabs .active::after {
    background: #f8f8f8;
}

.layout-tabs .add-layout {
    width: 26px;
    font-size: 18px;
    font-weight: 700;
}

.layout-tabs button.add-layout {
    width: 26px;
    margin-left: 2px;
}

.layout-tabs .add-layout::before,
.layout-tabs .add-layout::after {
    left: 0;
    right: 0;
    transform: skewX(-14deg);
}

.status-group {
    display: flex;
    align-items: center;
    background: #f5f5f5;
}

.status-group button {
    width: 30px;
    height: 28px;
}

.status-group button.narrow {
    width: 21px;
}

.status-group button.on {
    width: 28px;
    background: #cce4fb;
    border: 1px solid #5b87b5;
}

.status-group button.divided {
    width: 32px;
    height: 30px;
    border-left: 1px solid #dcdcdc;
}

.status-group button.model {
    width: 59px;
}

.status-group.wide button {
    width: 34px;
}

.coords {
    width: 188px;
    justify-content: flex-end;
    padding-right: 6px;
}

.status-select {
    display: flex;
    align-items: center;
    height: 30px;
    padding: 0 5px;
}

.scale {
    width: 43px;
}

.switcher {
    width: 208px;
    gap: 11px;
}

.units {
    width: 121px;
    gap: 15px;
    padding-left: 9px;
}

/* Windows taskbar */
.taskbar {
    display: flex;
    height: 50px;
    color: #111;
    font-size: 17px;
    background: linear-gradient(to right, #d8d5d7, #e0d2d2 26%, #e0d2d2 68%, #d7d4d5 85%, #d6d5d7);
}

.win-start {
    width: 60px;
}

.win-search {
    display: flex;
    align-items: center;
    gap: 14px;
    width: 429px;
    padding-left: 13px;
    background: #fff;
    border: 1px solid #c8c8c8;
}

.win-search input {
    flex: 1;
    font-size: 18px;
}

.win-search input::placeholder {
    color: #222;
}

.task-apps {
    display: flex;
    flex: 1;
}

.task-apps button {
    width: 62px;
    background: linear-gradient(#004e8c, #004e8c) bottom / 0 3px no-repeat;
}

.task-apps .open {
    background-size: 52px 3px;
}

.task-apps .current {
    background-color: #f3ebeb;
    background-size: 62px 3px;
}

.weather {
    gap: 12px;
    padding-right: 12px;
}

.tray {
    display: flex;
}

.tray button {
    width: 30px;
}

.clock {
    flex-direction: column;
    width: 94px;
    font-size: 14px;
    line-height: 23px;
}

.notices {
    position: relative;
    width: 60px;
    margin-right: 5px;
    padding-right: 12px;
    border-right: 1px solid #aaa;
}

.badge {
    position: absolute;
    top: 24px;
    left: 24px;
    width: 21px;
    height: 21px;
    border: 1px solid #777;
    border-radius: 50%;
    background: #d6d4d6;
    font-size: 13px;
    line-height: 19px;
}
```
